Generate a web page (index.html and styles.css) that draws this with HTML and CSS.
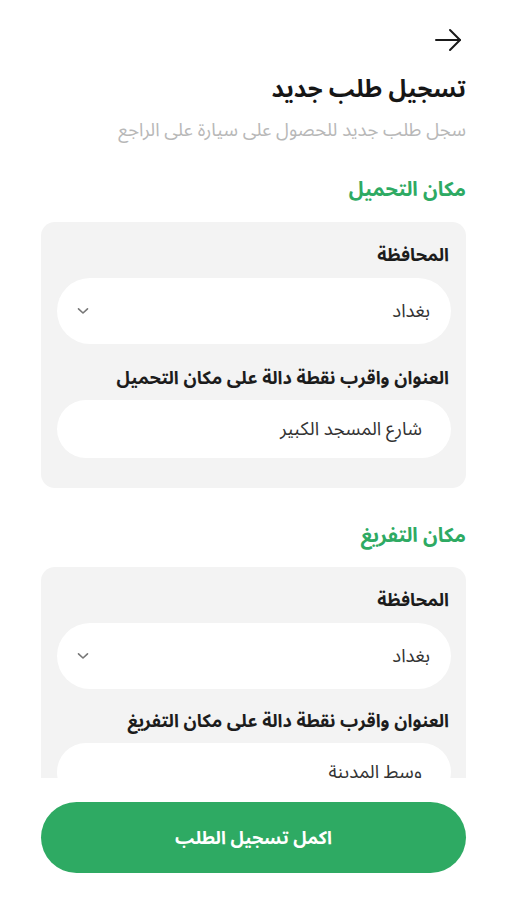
FILE: index.html
```html
<!DOCTYPE html>
<html lang="ar" dir="rtl">
<head>
<meta charset="utf-8">
<title>تسجيل طلب جديد</title>
<link rel="stylesheet" href="styles.css">
</head>
<body>
<div class="screen">
  <div class="scroll">
    <div class="topbar">
      <svg class="back" width="28" height="24" viewBox="0 0 28 24" fill="none" stroke="#1a1a1a" stroke-width="2" stroke-linecap="round" stroke-linejoin="round">
        <path d="M2 12H26"/>
        <path d="M16 2L26 12L16 22"/>
      </svg>
    </div>
    <h1 class="title">تسجيل طلب جديد</h1>
    <p class="subtitle">سجل طلب جديد للحصول على سيارة على الراجع</p>

    <h2 class="section">مكان التحميل</h2>
    <div class="card">
      <div class="label">المحافظة</div>
      <div class="field select">
        <span>بغداد</span>
        <svg class="chev" width="12" height="8" viewBox="0 0 12 8" fill="none" stroke="#777" stroke-width="1.6" stroke-linecap="round" stroke-linejoin="round"><path d="M1.5 1.8L6 6L10.5 1.8"/></svg>
      </div>
      <div class="label label2">العنوان واقرب نقطة دالة على مكان التحميل</div>
      <div class="field input"><span>شارع المسجد الكبير</span></div>
    </div>

    <h2 class="section section2">مكان التفريغ</h2>
    <div class="card card2">
      <div class="label">المحافظة</div>
      <div class="field select">
        <span>بغداد</span>
        <svg class="chev" width="12" height="8" viewBox="0 0 12 8" fill="none" stroke="#777" stroke-width="1.6" stroke-linecap="round" stroke-linejoin="round"><path d="M1.5 1.8L6 6L10.5 1.8"/></svg>
      </div>
      <div class="label label2">العنوان واقرب نقطة دالة على مكان التفريغ</div>
      <div class="field input"><span>وسط المدينة</span></div>
    </div>
  </div>
  <div class="footer">
    <button class="submit">اكمل تسجيل الطلب</button>
  </div>
</div>
</body>
</html>
```
FILE: styles.css
```css
* { box-sizing: border-box; }
html, body { margin: 0; padding: 0; background: #fff; }
body {
  font-family: "Noto Sans Arabic", "Noto Naskh Arabic", "DejaVu Sans", sans-serif;
  color: #1a1a1a;
}
.screen {
  height: 900px;
  display: flex;
  flex-direction: column;
}
.scroll {
  height: 778px;
  overflow: hidden;
  padding: 28px 41px 0 41px;
}
.topbar {
  display: flex;
  justify-content: flex-start;
  height: 24px;
  padding-right: 4px;
}
.back { display: block; }
.title {
  margin: 22px 0 0 0;
  font-size: 24px;
  line-height: 32px;
  font-weight: 700;
  color: #161616;
}
.subtitle {
  margin: 13px 0 0 0;
  font-size: 18.5px;
  line-height: 24px;
  color: #b8b8b8;
}
.section {
  margin: 33px 0 0 0;
  font-size: 20px;
  line-height: 28px;
  font-weight: 700;
  color: #2eaa63;
}
.section2 { margin-top: 34px; }
.card {
  margin-top: 18px;
  background: #f3f3f3;
  border-radius: 14px;
  padding: 21px 15px 30px 16px;
}
.card2 { margin-top: 17px; }
.label {
  font-size: 18px;
  line-height: 24px;
  font-weight: 700;
  color: #1c1c1c;
  padding-right: 2px;
}
.label2 { margin-top: 22px; }
.card2 .label2 { margin-top: 20px; }
.field {
  background: #fff;
  border-radius: 33px;
  display: flex;
  align-items: center;
  justify-content: space-between;
  font-size: 18.5px;
  color: #333;
}
.select {
  margin-top: 11px;
  height: 66px;
  padding: 0 21px 0 20px;
}
.input {
  margin-top: 10px;
  height: 58px;
  padding: 0 29px 0 20px;
  border-radius: 29px;
}
.chev { display: block; }
.footer {
  flex: 1;
  padding: 24px 41px 0 41px;
}
.submit {
  display: block;
  width: 100%;
  height: 71px;
  border: none;
  border-radius: 36px;
  background: #2eaa63;
  color: #fff;
  font-family: inherit;
  font-size: 18px;
  font-weight: 700;
}
```
